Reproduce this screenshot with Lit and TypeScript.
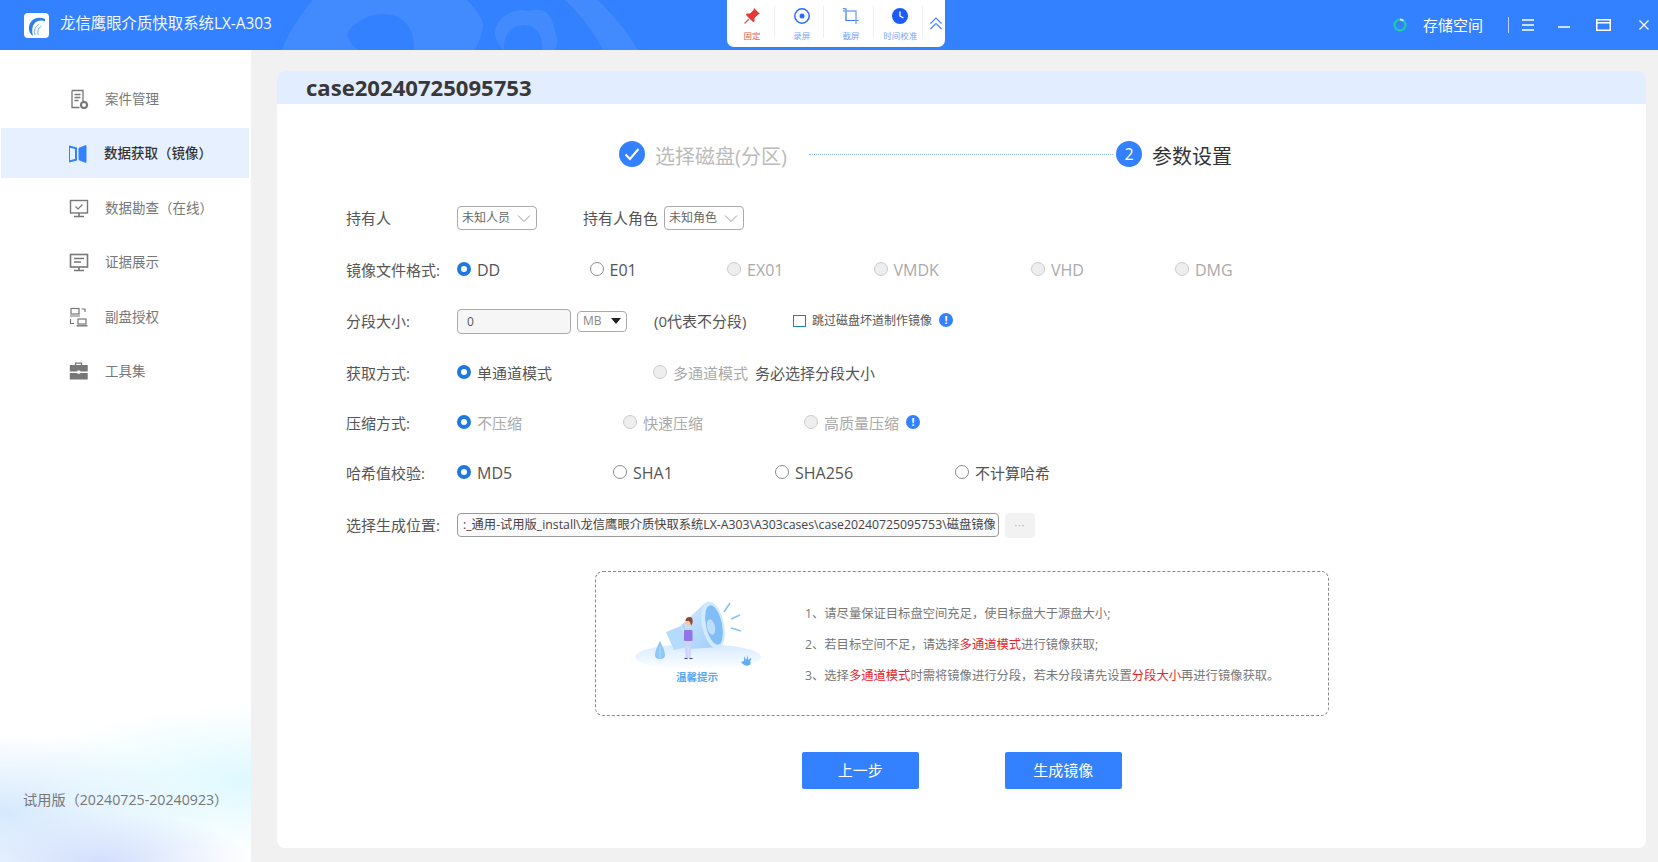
import {html, css, svg, LitElement} from 'lit';
import {customElement} from 'lit/decorators.js';
import {styleMap} from 'lit/directives/style-map.js';

type Opt = {label: string; width: number; state?: 'on' | 'off'; muted?: boolean; info?: boolean; latin?: boolean};

const navIcons = [
  svg`<path d="M3 1.5h11v10.5M3 1.5v17h7.5M5.5 5.5h6M5.5 8.5h6M5.500 11.5h4" fill="none" stroke="#777" stroke-width="1.3"/><circle cx="15" cy="16" r="3" fill="none" stroke="#777" stroke-width="2"/><path d="M15 11.8v1.5M15 18.7v1.5M10.9 16h1.5M17.6 16h1.5" stroke="#777" stroke-width="1.4"/>`,
  svg`<path d="M0 3.5l7 1.8v11.4l-7 1.8z" fill="none" stroke="#3381ff" stroke-width="2"/><path d="M10 5.2L17 2.5v17L10 16.8z" fill="#3381ff" stroke="#3381ff"/>`,
  svg`<rect x="1.5" y="2.5" width="17" height="12.5" fill="none" stroke="#777" stroke-width="1.4"/><path d="M6.5 8.5l2.5 2.5 4.5-4.5" fill="none" stroke="#777" stroke-width="1.2"/><path d="M10 15v3M5 18.5h10" stroke="#777" stroke-width="1.6"/>`,
  svg`<rect x="1.5" y="2.5" width="17" height="12.5" fill="none" stroke="#777" stroke-width="1.6"/><path d="M5 6.5h10M5 10h7" stroke="#777" stroke-width="1.4"/><path d="M10 15v3M5 18.5h10" stroke="#777" stroke-width="1.6"/>`,
  svg`<rect x="2" y="1.5" width="8" height="5.5" fill="none" stroke="#777" stroke-width="1.2"/><path d="M1 9h10M12.5 2H16v3M1.5 12v4.5H5" fill="none" stroke="#777" stroke-width="1.2"/><rect x="9" y="12" width="8" height="5" fill="none" stroke="#777" stroke-width="1.2"/><path d="M7.5 18.8h11" stroke="#777" stroke-width="1.4"/>`,
  svg`<path d="M6.5 4.5V2.2h6v2.3" fill="none" stroke="#777" stroke-width="1.3"/><path d="M.8 4h17.9v6.6H.8zM.8 12h17.9v6.5H.8z" fill="#777"/><rect x="8" y="9.4" width="3.4" height="3.4" rx="1" fill="#fff"/>`,
];

const nav = ['案件管理', '数据获取（镜像）', '数据勘查（在线）', '证据展示', '副盘授权', '工具集'];

const formats: Opt[] = [
  {label: 'DD', width: 132.5, state: 'on', latin: true},
  {label: 'E01', width: 137.5, state: 'off', latin: true},
  {label: 'EX01', width: 146.5, muted: true, latin: true},
  {label: 'VMDK', width: 157.5, muted: true, latin: true},
  {label: 'VHD', width: 144, muted: true, latin: true},
  {label: 'DMG', width: 60, muted: true, latin: true},
];
const modes: Opt[] = [
  {label: '单通道模式', width: 196, state: 'on'},
  {label: '多通道模式', width: 96, muted: true},
];
const compress: Opt[] = [
  {label: '不压缩', width: 166, state: 'on', muted: true},
  {label: '快速压缩', width: 181, muted: true},
  {label: '高质量压缩', width: 102, muted: true, info: true},
];
const hashes: Opt[] = [
  {label: 'MD5', width: 156, state: 'on', latin: true},
  {label: 'SHA1', width: 162, state: 'off', latin: true},
  {label: 'SHA256', width: 180, state: 'off', latin: true},
  {label: '不计算哈希', width: 100, state: 'off'},
];

@customElement('app-root')
export class AppRoot extends LitElement {
  static styles = css`
    :host {
      display: block;
      position: relative;
      width: 1658px;
      height: 862px;
      overflow: hidden;
      background: #f1f1f1;
      font-family: "Open Sans", "Noto Sans CJK SC", sans-serif;
      color: #555;
    }
    .top {
      position: relative;
      height: 50px;
      background: #3381ff;
      color: #fff;
      display: flex;
      align-items: center;
      padding-left: 24px;
      overflow: hidden;
    }
    .blobs {
      position: absolute;
      left: 0;
      top: 0;
    }
    .logo {
      position: relative;
      width: 25px;
      height: 25px;
      margin-right: 11px;
    }
    .app-name {
      position: relative;
      font-size: 15.4px;
      line-height: 20px;
      white-space: nowrap;
      flex: 1;
      opacity: 0.95;
      margin-bottom: 3px;
    }
    .win {
      position: relative;
      display: flex;
      align-items: center;
      height: 50px;
    }
    .store {
      font-size: 15px;
      line-height: 20px;
      margin-left: 16px;
      width: 85px;
      margin-bottom: 1px;
    }
    .bar {
      width: 1px;
      height: 16px;
      background: #b9d3ff;
      margin-right: 13px;
    }
    .win svg {
      display: block;
    }
    .tools {
      position: absolute;
      left: 727px;
      top: 0;
      width: 218px;
      height: 47px;
      background: #fff;
      border-radius: 0 0 7px 7px;
      display: flex;
      box-sizing: border-box;
    }
    .tool {
      width: 49.3px;
      flex: none;
      display: flex;
      flex-direction: column;
      align-items: center;
      padding: 1px 0 0 5px;
      box-sizing: border-box;
      height: 32px;
      margin-top: 6px;
      border-right: 1px solid #eef0f3;
      font-size: 8.5px;
      line-height: 12px;
      color: #7ba4fb;
      white-space: nowrap;
    }
    .tool svg {
      display: block;
      height: 18px;
      margin-bottom: 5px;
      flex: none;
    }
    .tool.pin {
      color: #e8603f;
      width: 48px;
      padding-left: 3px;
    }
    .chev {
      margin: 17px 0 0 7px;
    }
    .body {
      display: flex;
      height: 812px;
    }
    .side {
      width: 251px;
      flex: none;
      background:
        radial-gradient(ellipse 150px 50px at 40% 100%, #d2dffd 0%, rgba(210, 223, 253, 0) 100%),
        radial-gradient(ellipse 230px 75px at 100% 90%, #def9ff 0%, rgba(222, 249, 255, 0) 100%),
        radial-gradient(ellipse 220px 80px at 0% 94%, #d5e9fd 0%, rgba(213, 233, 253, 0) 100%),
        #fff;
      display: flex;
      flex-direction: column;
      padding: 23.5px 2px 0 1px;
      box-sizing: border-box;
      gap: 4.5px;
    }
    .item {
      height: 50px;
      flex: none;
      display: flex;
      align-items: center;
      padding-left: 68px;
      font-size: 13.5px;
      line-height: 20px;
      color: #777;
    }
    .item svg {
      width: 20px;
      height: 20px;
      margin-right: 16px;
      flex: none;
    }
    .item.active {
      background: #e7f0ff;
      color: #333;
      font-weight: 500;
    }
    .item.active svg {
      margin-right: 15px;
    }
    .trial {
      margin-top: auto;
      padding: 0 0 52px 22px;
      font-size: 14.2px;
      line-height: 20px;
      color: #777;
      white-space: nowrap;
    }
    .panel {
      margin: 21px 12px 14px 26px;
      flex: 1;
      background: #fff;
      border-radius: 8px;
      overflow: hidden;
    }
    .head {
      height: 33px;
      background: #e2edff;
      padding-left: 29px;
      font-size: 22.1px;
      line-height: 32px;
      font-weight: 700;
      color: #383838;
    }
    .steps {
      display: flex;
      align-items: center;
      height: 26px;
      margin: 37px 0 0 342px;
      font-size: 20px;
      line-height: 26px;
      white-space: nowrap;
    }
    .dot {
      width: 26px;
      height: 26px;
      border-radius: 50%;
      background: #3381ff;
      color: #fff;
      font-size: 16px;
      display: flex;
      align-items: center;
      justify-content: center;
      margin-right: 10px;
      flex: none;
    }
    .done {
      color: #bbb;
      width: 133px;
      margin-top: 5px;
    }
    .line {
      width: 304px;
      margin: 0 3px 0 21px;
      border-top: 1px dotted #8fb4ea;
    }
    .now {
      color: #333;
      margin-top: 5px;
    }
    .form {
      display: grid;
      grid-template-rows: 52px 51px 52px 50px 50px 52px 30px;
      margin: 36px 0 0 69px;
      font-size: 15px;
    }
    .row {
      display: flex;
      align-items: center;
      height: 30px;
      white-space: nowrap;
      line-height: 20px;
    }
    .label {
      width: 111px;
      flex: none;
    }
    .sel {
      width: 80px;
      height: 24px;
      box-sizing: border-box;
      border: 1px solid #aaa;
      border-radius: 4px;
      font-size: 12px;
      color: #666;
      display: flex;
      align-items: center;
      justify-content: space-between;
      padding: 0 5px 0 4px;
    }
    .role {
      margin: 0 6px 0 46px;
    }
    .opt {
      display: flex;
      align-items: center;
      color: #555;
      flex: none;
    }
    .opt.muted {
      color: #aaa;
    }
    .opt.latin {
      font-size: 16px;
    }
    .radio {
      width: 14px;
      height: 14px;
      box-sizing: border-box;
      border-radius: 50%;
      border: 1px solid #8c8c8c;
      margin: 0 6px 2px 0;
      flex: none;
      background: #fff;
    }
    .muted .radio {
      border-color: #ccc;
      background: #eee;
    }
    .opt .radio.on {
      border: 4px solid #1f78e0;
      background: #fff;
    }
    .num {
      width: 114px;
      height: 25px;
      box-sizing: border-box;
      background: #f6f6f6;
      border: 1px solid #aaa;
      border-radius: 4px;
      font-size: 12px;
      line-height: 23px;
      color: #555;
      padding-left: 9px;
    }
    .unit {
      width: 50px;
      height: 21px;
      box-sizing: border-box;
      margin-left: 6px;
      border: 1px solid #aaa;
      border-radius: 4px;
      font-size: 12px;
      color: #888;
      display: flex;
      align-items: center;
      justify-content: space-between;
      padding: 0 5px;
    }
    .tri {
      width: 0;
      height: 0;
      border: 5px solid transparent;
      border-top: 6px solid #222;
      border-bottom: 0;
    }
    .hint {
      margin-left: 27px;
      width: 139px;
    }
    .box {
      width: 13px;
      height: 12px;
      box-sizing: border-box;
      border: 1.5px solid #1f78e0;
      margin-right: 6px;
    }
    .small {
      font-size: 12px;
    }
    .info {
      width: 14px;
      height: 14px;
      border-radius: 50%;
      background: #3381ff;
      color: #fff;
      font-size: 11px;
      line-height: 14px;
      font-weight: 700;
      font-style: normal;
      text-align: center;
      margin: 0 0 2px 7px;
      flex: none;
    }
    .must {
      margin-left: 6px;
    }
    .path {
      width: 542px;
      height: 24px;
      box-sizing: border-box;
      border: 1px solid #999;
      border-radius: 4px;
      background: #fafafa;
      font-size: 12.27px;
      line-height: 22px;
      color: #444;
      padding: 0 2px 0 5px;
      overflow: hidden;
      white-space: nowrap;
    }
    .more {
      width: 30px;
      height: 25px;
      margin-left: 6px;
      background: #f2f2f2;
      border-radius: 4px;
      color: #aaa;
      font-size: 10px;
      letter-spacing: 1px;
      line-height: 24px;
      text-align: center;
    }
    .tips {
      width: 734px;
      height: 145px;
      box-sizing: border-box;
      margin: 31px 0 0 318px;
      border: 1px dashed #888;
      border-radius: 8px;
      display: flex;
      align-items: center;
      padding-left: 29px;
    }
    .tips svg {
      flex: none;
      width: 150px;
      height: 95px;
      margin: 0 30px 4px 0;
    }
    .tips ol {
      list-style: none;
      margin: 0;
      padding: 2px 0 0;
      font-size: 12.3px;
      line-height: 31px;
      color: #777;
      white-space: nowrap;
    }
    .tips b {
      font-weight: 400;
      color: #e3262c;
    }
    .btns {
      display: flex;
      gap: 85.5px;
      margin: 36px 0 0 524.5px;
    }
    .btn {
      width: 117.5px;
      height: 37px;
      background: #3381ff;
      border-radius: 2px;
      color: #fff;
      font-size: 15px;
      line-height: 37px;
      text-align: center;
    }
  `;

  radios(opts: Opt[]) {
    return opts.map(
      o => html`<span class="opt ${o.muted ? 'muted' : ''} ${o.latin ? 'latin' : ''}" style=${styleMap({width: o.width + 'px'})}>
        <i class="radio ${o.state === 'on' ? 'on' : ''}"></i>${o.label}${o.info
          ? html`<i class="info">!</i>`
          : ''}
      </span>`
    );
  }

  chevron() {
    return html`<svg width="14" height="9" viewBox="0 0 14 9"><path d="M1 1.5l6 6 6-6" fill="none" stroke="#999" stroke-width="1"/></svg>`;
  }

  renderTop() {
    return html`
      <div class="top">
        <svg class="blobs" width="700" height="50" viewBox="0 0 700 50">
          <path d="M282 50C290 30 300 15 313 0H467C478 12 484 20 483 27C482 35 479 42 475 50H414C415 30 405 14 383 14C365 14 345 28 348 37C349 42 353 46 358 50Z" fill="#418bff"/>
          <path d="M504 50C503 34 512 25 524 25C536 25 544 36 542 50H555C558 44 558 38 556 34C553 22 549 10 540 10C532 9 528 12 522 10C508 10 494 22 495 35C496 41 499 46 504 50Z" fill="#418bff"/>
          <path d="M565 0H598C610 12 618 22 625 30L638 50H603C595 34 582 16 565 0Z" fill="#418bff"/>
        </svg>
        <svg class="logo" viewBox="0 0 25 25">
          <rect width="25" height="25" rx="4" fill="#fff"/>
          <path d="M21 6C14 3 6 6 5 14C4.500 18 6 21 9 23C7.500 17 8 11 13 8.500C16 7 19 7 21 8.500Z" fill="#2f7fe6"/>
          <path d="M11 22C10 17 11 13 15 11.500M14 22C13.500 18 14 15 17 13.500" fill="none" stroke="#6aa8f0" stroke-width="1"/>
        </svg>
        <div class="app-name">龙信鹰眼介质快取系统LX-A303</div>
        <div class="win">
          <svg width="14" height="14" viewBox="0 0 14 14"><circle cx="7" cy="7" r="5.500" fill="none" stroke="#19d3a2" stroke-width="2"/><path d="M7 1.500A5.500 5.500 0 0 1 10.500 2.800" fill="none" stroke="#cfe6ff" stroke-width="2"/></svg>
          <span class="store">存储空间</span>
          <i class="bar"></i>
          <svg width="12" height="12" viewBox="0 0 12 12" style="margin-right:24px"><path d="M0 1h12M0 6h12M0 11h12" stroke="#fff" stroke-width="1.300"/></svg>
          <svg width="12" height="2" viewBox="0 0 12 2" style="margin:4px 26px 0 0"><path d="M0 1h12" stroke="#fff" stroke-width="1.500"/></svg>
          <svg width="15" height="12" viewBox="0 0 15 12" style="margin-right:28px"><rect x=".75" y=".75" width="13.500" height="10.500" fill="none" stroke="#fff" stroke-width="1.500"/><path d="M1 3.800h13" stroke="#fff" stroke-width="1.500"/></svg>
          <svg width="10" height="10" viewBox="0 0 10 10" style="margin-right:9px"><path d="M.5.500l9 9M9.500.500l-9 9" stroke="#fff" stroke-width="1.300"/></svg>
        </div>
      </div>
    `;
  }

  renderTools() {
    return html`
      <div class="tools">
        <div class="tool pin">
          <svg width="18" height="18" viewBox="0 0 18 18"><path d="M11 1l6 6-2 .5-3.500 3.500V14.500L10 15 3 8l.5-1.500H7L10.500 3z" fill="#e53a33"/><path d="M6 12l-4.500 4.500" stroke="#c8706a" stroke-width="1.500"/></svg>
          固定
        </div>
        <div class="tool">
          <svg width="18" height="18" viewBox="0 0 18 18"><circle cx="9" cy="9" r="7.200" fill="none" stroke="#2a6bff" stroke-width="1.500"/><circle cx="9" cy="9" r="2.500" fill="#2a6bff"/></svg>
          录屏
        </div>
        <div class="tool">
          <svg width="18" height="18" viewBox="0 0 18 18"><path d="M1 1.500l3 .5V13.500H16.500" fill="none" stroke="#3f78f5" stroke-width="1.200"/><path d="M1 4h13V17" fill="none" stroke="#7ea6fa" stroke-width="1.400"/></svg>
          截屏
        </div>
        <div class="tool">
          <svg width="18" height="18" viewBox="0 0 18 18"><circle cx="9" cy="9" r="8" fill="#1a5cf5"/><path d="M9 4.500V9l3.500 2" fill="none" stroke="#fff" stroke-width="1.300"/></svg>
          时间校准
        </div>
        <svg class="chev" width="12" height="13" viewBox="0 0 12 13"><path d="M.5 6.500L6 1l5.500 5.500M.5 12L6 6.500 11.500 12" fill="none" stroke="#4a86f0" stroke-width="1.200"/></svg>
      </div>
    `;
  }

  renderSide() {
    return html`
      <div class="side">
        ${nav.map(
          (name, i) => html`<div class="item ${i === 1 ? 'active' : ''}">
            <svg viewBox="0 0 20 20">${navIcons[i]}</svg>${name}
          </div>`
        )}
        <div class="trial">试用版（20240725-20240923）</div>
      </div>
    `;
  }

  renderIllustration() {
    return html`
      <svg viewBox="0 0 150 95">
        <defs>
          <linearGradient id="ground" x1="0" y1="0" x2="0" y2="1">
            <stop offset="0" stop-color="#d6eaff"/><stop offset="1" stop-color="#fff"/>
          </linearGradient>
          <linearGradient id="cone" x1="0" y1="0" x2="1" y2="1">
            <stop offset="0" stop-color="#d6eaff"/><stop offset="1" stop-color="#9bcbf9"/>
          </linearGradient>
        </defs>
        <ellipse cx="73" cy="63" rx="63" ry="13" fill="url(#ground)"/>
        <path d="M41 38l15-6 7 21-14 3z" fill="#b4dafc"/>
        <path d="M55 32L80 9l16 44-32 2z" fill="url(#cone)"/>
        <ellipse cx="88" cy="31" rx="11" ry="24" transform="rotate(-12 88 31)" fill="#d3e9ff"/>
        <ellipse cx="89" cy="31" rx="8" ry="20" transform="rotate(-12 89 31)" fill="#81bdf6"/>
        <ellipse cx="86" cy="33" rx="4" ry="8" transform="rotate(-12 86 33)" fill="#bfdefc"/>
        <path d="M99 18l6-9M106 25l9-4M106 34l10 3" stroke="#86c3f7" stroke-width="1.600"/>
        <rect x="59" y="36" width="8.500" height="11" rx="1" fill="#9274ea"/>
        <path d="M59.500 47h3.200l.3 17h-2.500zM63.500 47h3l-1 17h-2.200z" fill="#ccd5f7"/>
        <circle cx="64" cy="28" r="3.500" fill="#f2c5a8"/>
        <path d="M60.500 27c0-3 2-4.500 5-4 2 .5 2.500 3 2 6l-1.500 3c0-2-.5-4-2-5z" fill="#8a4b35"/>
        <path d="M59 29l-2 4 3 3z" fill="#a8d2fa"/>
        <path d="M59.500 64.500h3M64.500 64.500h3" stroke="#3b3f6b" stroke-width="1.200"/>
        <path d="M35 47c3 6 5 10 5 14 0 3-2 4-5 4s-5-1-5-4c0-4 2-8 5-14z" fill="#8cc8f8"/>
        <path d="M35 52v17" stroke="#d5ecff" stroke-width=".6"/>
        <path d="M116 68c3 5 12 5 9-1 2-1 1-3 1-3l-3 2 0-5-2 5-2-4 0 5z" fill="#60aef5"/>
        <text x="72" y="87" text-anchor="middle" font-size="10.500" font-weight="700" fill="#5ba7f5">温馨提示</text>
      </svg>
    `;
  }

  renderForm() {
    return html`
      <div class="form">
        <div class="row">
          <span class="label">持有人</span>
          <span class="sel">未知人员${this.chevron()}</span>
          <span class="role">持有人角色</span>
          <span class="sel">未知角色${this.chevron()}</span>
        </div>
        <div class="row"><span class="label">镜像文件格式:</span>${this.radios(formats)}</div>
        <div class="row">
          <span class="label">分段大小:</span>
          <span class="num">0</span>
          <span class="unit">MB<i class="tri"></i></span>
          <span class="hint">(0代表不分段)</span>
          <i class="box"></i><span class="small">跳过磁盘坏道制作镜像</span>
          <i class="info">!</i>
        </div>
        <div class="row">
          <span class="label">获取方式:</span>${this.radios(modes)}
          <span class="must">务必选择分段大小</span>
        </div>
        <div class="row"><span class="label">压缩方式:</span>${this.radios(compress)}</div>
        <div class="row"><span class="label">哈希值校验:</span>${this.radios(hashes)}</div>
        <div class="row">
          <span class="label">选择生成位置:</span>
          <span class="path">:_通用-试用版_install\\龙信鹰眼介质快取系统LX-A303\\A303cases\\case20240725095753\\磁盘镜像</span>
          <span class="more">···</span>
        </div>
      </div>
    `;
  }

  render() {
    return html`
      ${this.renderTop()} ${this.renderTools()}
      <div class="body">
        ${this.renderSide()}
        <div class="panel">
          <div class="head">case20240725095753</div>
          <div class="steps">
            <span class="dot">
              <svg width="16" height="14" viewBox="0 0 16 14"><path d="M1.500 7.500l4.500 4.500 8.500-10" fill="none" stroke="#fff" stroke-width="2"/></svg>
            </span>
            <span class="done">选择磁盘(分区)</span>
            <i class="line"></i>
            <span class="dot">2</span>
            <span class="now">参数设置</span>
          </div>
          ${this.renderForm()}
          <div class="tips">
            ${this.renderIllustration()}
            <ol>
              <li>1、请尽量保证目标盘空间充足，使目标盘大于源盘大小;</li>
              <li>2、若目标空间不足，请选择<b>多通道模式</b>进行镜像获取;</li>
              <li>3、选择<b>多通道模式</b>时需将镜像进行分段，若未分段请先设置<b>分段大小</b>再进行镜像获取。</li>
            </ol>
          </div>
          <div class="btns">
            <div class="btn">上一步</div>
            <div class="btn">生成镜像</div>
          </div>
        </div>
      </div>
    `;
  }
}
